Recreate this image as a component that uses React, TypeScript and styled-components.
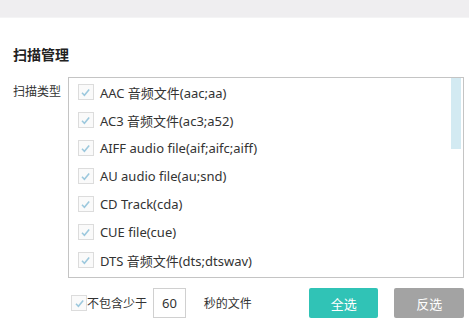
import React from 'react';
import styled, { createGlobalStyle } from 'styled-components';

const GlobalStyle = createGlobalStyle`
  html, body {
    margin: 0;
    padding: 0;
    background: #ffffff;
  }
  body {
    font-family: "Noto Sans", "Noto Sans CJK SC", sans-serif;
    color: #333;
  }
`;

const Page = styled.div`
  width: 469px;
  height: 334px;
  overflow: hidden;
  background: #fff;
  display: flex;
  flex-direction: column;
`;

const TopBand = styled.div`
  height: 17px;
  background: #efeef0;
  border-bottom: 1px solid #f4f4f5;
  flex-shrink: 0;
`;

const Content = styled.div`
  padding: 27px 5px 0 13px;
  display: flex;
  flex-direction: column;
`;

const SectionTitle = styled.h2`
  margin: 0;
  font-size: 14px;
  font-weight: bold;
  line-height: 20px;
  color: #222;
`;

const TypeRow = styled.div`
  display: flex;
  margin-top: 12px;
`;

const Label = styled.div`
  width: 56px;
  font-size: 12px;
  line-height: 18px;
  padding-top: 6px;
  color: #333;
`;

const ListBox = styled.div`
  position: relative;
  width: 393px;
  height: 199px;
  border: 1px solid #c4c4c4;
  padding: 0 0 0 9px;
  box-sizing: content-box;
  overflow: hidden;
`;

const ScrollThumb = styled.div`
  position: absolute;
  right: 2px;
  top: 0;
  width: 10px;
  height: 71px;
  background: #d3eaf2;
`;

const Item = styled.div`
  display: flex;
  align-items: center;
  height: 28px;
  gap: 6px;
  font-size: 13px;
  color: #333;
  white-space: nowrap;
`;

const Box = styled.span`
  width: 14px;
  height: 14px;
  border: 1px solid #dcdcdc;
  background: #fafafa;
  display: inline-flex;
  align-items: center;
  justify-content: center;
  flex-shrink: 0;
`;

const Check = () => (
  <Box>
    <svg width="11" height="11" viewBox="0 0 11 11">
      <path d="M2 5.8 L4.4 8.2 L9.2 2.6" fill="none" stroke="#9cc8dd" strokeWidth="1.6" />
    </svg>
  </Box>
);

const Footer = styled.div`
  display: flex;
  align-items: center;
  margin-top: 10px;
  padding-left: 58px;
  height: 30px;
`;

const FooterLabel = styled.span<{ $gap?: number }>`
  font-size: 12px;
  color: #333;
  margin-left: ${p => p.$gap ?? 0}px;
  white-space: nowrap;
`;

const NumBox = styled.div`
  width: 31px;
  height: 28px;
  border: 1px solid #d0d0d0;
  margin-left: 6px;
  display: flex;
  align-items: center;
  justify-content: center;
  font-size: 13px;
  color: #333;
`;

const Button = styled.button<{ $gray?: boolean }>`
  width: 70px;
  height: 30px;
  border: none;
  border-radius: 2px;
  background: ${p => (p.$gray ? '#a3a3a3' : '#30c3b6')};
  color: #fff;
  font-family: inherit;
  font-size: 13px;
  padding: 0;
  margin-left: ${p => (p.$gray ? 16 : 57)}px;
`;

const items = [
  'AAC 音频文件(aac;aa)',
  'AC3 音频文件(ac3;a52)',
  'AIFF audio file(aif;aifc;aiff)',
  'AU audio file(au;snd)',
  'CD Track(cda)',
  'CUE file(cue)',
  'DTS 音频文件(dts;dtswav)',
];

export default function App() {
  return (
    <>
      <GlobalStyle />
      <Page>
        <TopBand />
        <Content>
          <SectionTitle>扫描管理</SectionTitle>
          <TypeRow>
            <Label>扫描类型</Label>
            <ListBox>
              <ScrollThumb />
              {items.map(t => (
                <Item key={t}>
                  <Check />
                  {t}
                </Item>
              ))}
            </ListBox>
          </TypeRow>
          <Footer>
            <Check />
            <FooterLabel>不包含少于</FooterLabel>
            <NumBox>60</NumBox>
            <FooterLabel $gap={18}>秒的文件</FooterLabel>
            <Button>全选</Button>
            <Button $gray>反选</Button>
          </Footer>
        </Content>
      </Page>
    </>
  );
}
